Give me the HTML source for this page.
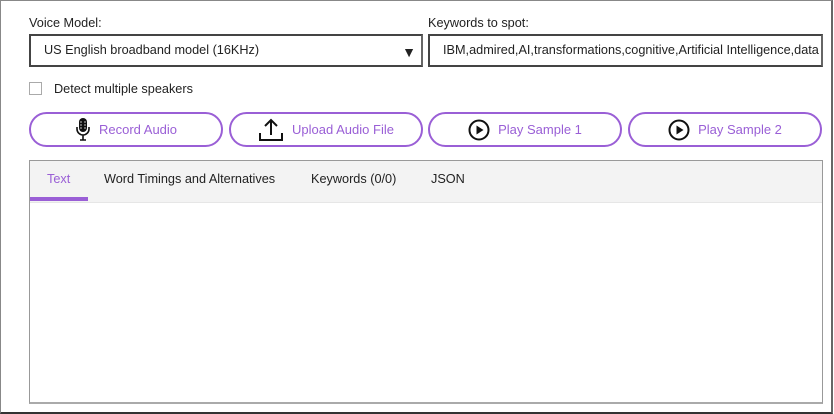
<!DOCTYPE html>
<html><head><style>
*{box-sizing:border-box;margin:0;padding:0}
body{width:834px;height:414px;background:#fff;font-family:"Liberation Sans",Arial,sans-serif;font-size:12.7px;color:#222;position:relative;overflow:hidden}
.outer{position:absolute;left:0;top:0;width:833px;height:414px;border:1px solid #888;border-right:2px solid #666;border-bottom:2px solid #333}
.lbl{position:absolute;top:16px;font-size:12.7px;color:#222}
.box{position:absolute;top:34px;height:33px;border:2px solid #444;border-right-color:#666;font-size:12.7px;line-height:29px;padding-left:13px;white-space:nowrap;overflow:hidden}
.btn{position:absolute;top:112px;height:35px;width:194px;border:2px solid #9a5fd6;border-radius:18px;color:#9a5fd6;font-size:13px;display:flex;align-items:center;justify-content:center;gap:8px}
.panel{position:absolute;left:29px;top:160px;width:794px;height:244px;border:1px solid #999;border-bottom:2px solid #aaa}
.tabs{height:42px;background:#f3f3f3;border-bottom:1px solid #e6e6e6;position:relative}
.tab{position:absolute;top:11px;font-size:12.7px;color:#222}
</style></head><body>
<div class="outer"></div>
<div class="lbl" style="left:29px">Voice Model:</div>
<div class="lbl" style="left:428px">Keywords to spot:</div>
<div class="box" style="left:29px;width:394px">US English broadband model (16KHz)<span style="position:absolute;right:5px;top:2px;font-size:14px">&#9660;</span></div>
<div class="box" style="left:428px;width:395px;padding-left:13px">IBM,admired,AI,transformations,cognitive,Artificial Intelligence,data</div>
<div style="position:absolute;left:29px;top:82px;width:13px;height:13px;border:1px solid #aaa"></div>
<div style="position:absolute;left:54px;top:82px;font-size:12.7px">Detect multiple speakers</div>
<div class="btn" style="left:29px"><svg width="16" height="25" viewBox="0 0 16 25"><rect x="4" y="1" width="8" height="14" rx="4" fill="#111"/><path d="M2 10v2a6 6 0 0 0 12 0V10M8 18v5M5 23h6" stroke="#111" stroke-width="1.6" fill="none"/><path d="M5 5h2M5 8h2M5 11h2M9 5h2M9 8h2M9 11h2" stroke="#fff" stroke-width="0.8"/></svg>Record Audio</div>
<div class="btn" style="left:229px"><svg width="26" height="24" viewBox="0 0 26 24"><path d="M13 17V2M7 8l6-6 6 6M2 15v7h22v-7" stroke="#111" stroke-width="2" fill="none"/></svg>Upload Audio File</div>
<div class="btn" style="left:428px"><svg width="22" height="22" viewBox="0 0 22 22"><circle cx="11" cy="11" r="9.5" stroke="#111" stroke-width="2" fill="none"/><path d="M8.5 6.5v9l7-4.5z" fill="#111"/></svg>Play Sample 1</div>
<div class="btn" style="left:628px"><svg width="22" height="22" viewBox="0 0 22 22"><circle cx="11" cy="11" r="9.5" stroke="#111" stroke-width="2" fill="none"/><path d="M8.5 6.5v9l7-4.5z" fill="#111"/></svg>Play Sample 2</div>
<div class="panel"><div class="tabs">
<div class="tab" style="left:17px;color:#9a5fd6">Text</div>
<div class="tab" style="left:74px">Word Timings and Alternatives</div>
<div class="tab" style="left:281px">Keywords (0/0)</div>
<div class="tab" style="left:401px">JSON</div>
<div style="position:absolute;left:0;top:36px;width:58px;height:4px;background:#9a5fd6"></div>
</div></div>
</body></html>
